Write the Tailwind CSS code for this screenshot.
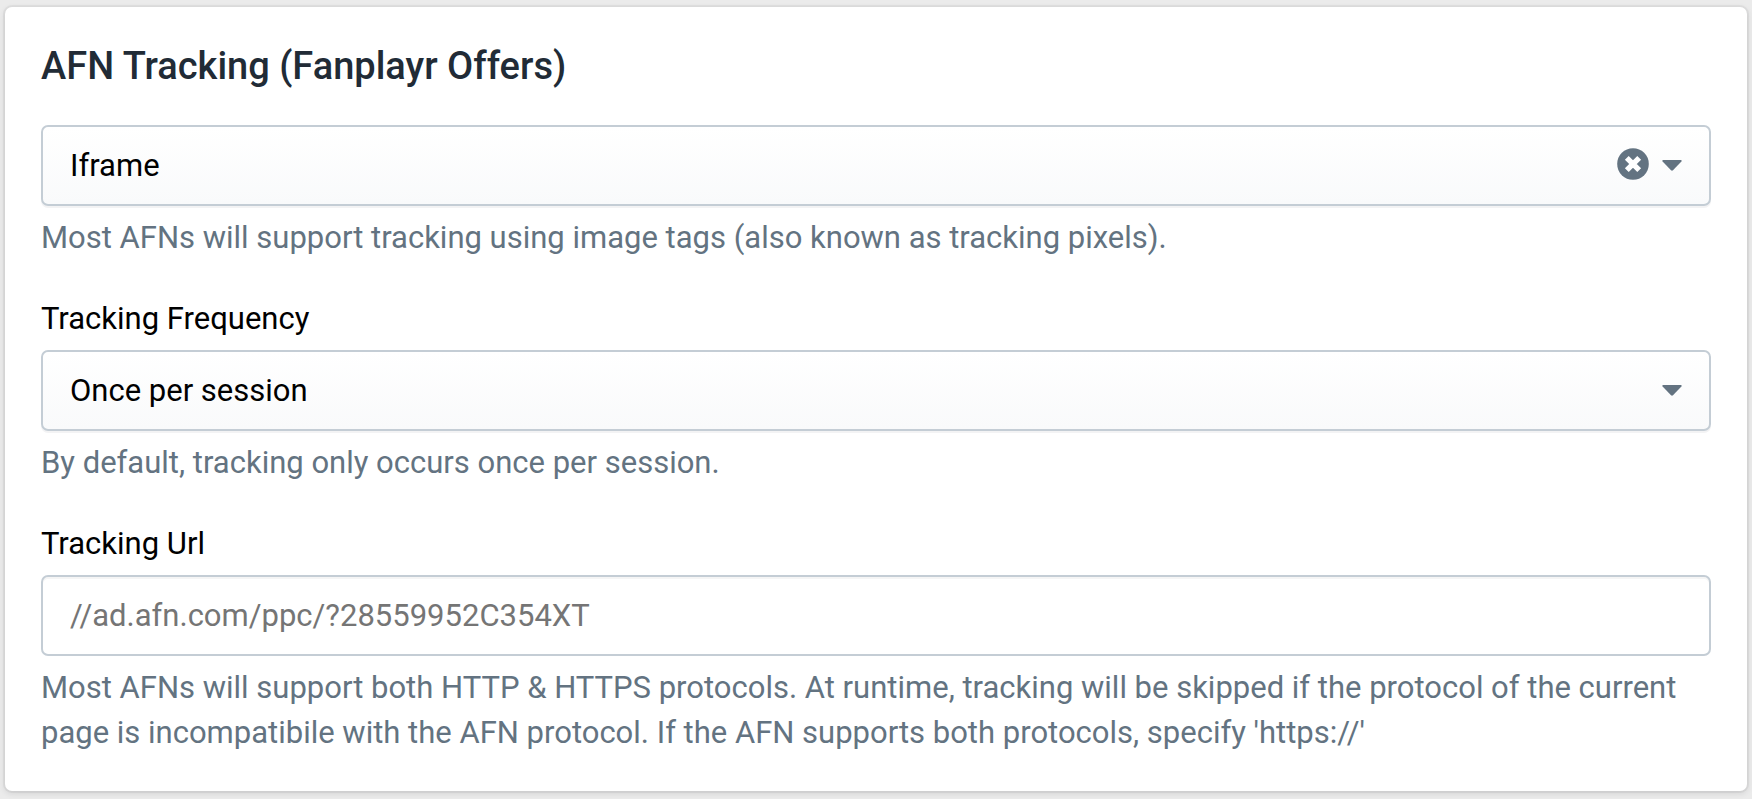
<!DOCTYPE html>
<html lang="en">

<head>
    <meta charset="UTF-8">
    <meta name="viewport" content="width=device-width, initial-scale=1.0">
    <title>AFN Tracking</title>
    <script src="https://cdn.jsdelivr.net/npm/@tailwindcss/browser@4"></script>
</head>

<body class="min-h-screen bg-[#ebebeb] px-[5px] pt-[7px] pb-2 font-[Roboto,sans-serif] text-[31px] leading-[45px] text-black">

    <form class="rounded-[7px] bg-white p-9 shadow-[0_0_0_2px_rgba(63,63,68,0.06),0_2px_6px_rgba(63,63,68,0.16)]">
        <h1 class="mb-9 text-[38px] leading-[46px] font-medium text-[#212b36]">AFN Tracking (Fanplayr Offers)</h1>

        <div class="space-y-9">
            <!-- Tracking type -->
            <div>
                <div class="relative">
                    <select aria-label="Tracking type" aria-describedby="type-help"
                        class="block h-[81px] w-full appearance-none rounded-[7px] border-2 border-[#c4cdd5] bg-linear-to-b from-white to-[#f9fafb] pr-32 pl-[27px] shadow-[0_2px_0_rgba(22,29,37,0.05)]">
                        <option>Iframe</option>
                        <option>Image</option>
                    </select>
                    <div class="pointer-events-none absolute inset-y-0 right-[29px] flex items-center gap-[13px] pb-1">
                        <button type="button" aria-label="Clear" class="pointer-events-auto">
                            <svg class="size-8" viewBox="0 0 32 32">
                                <circle cx="16" cy="16" r="15.8" fill="#637381" />
                                <path d="M9.8 9.8l12.4 12.4M22.2 9.8L9.8 22.2" stroke="#fff" stroke-width="5.4" />
                            </svg>
                        </button>
                        <svg class="mt-1 h-[11px] w-5" viewBox="0 0 20 11">
                            <path d="M1.2 0h17.6q1.4.3.6 1.5L11 10.3q-1 .9-2 0L.6 1.5Q-.2.3 1.2 0z" fill="#637381" />
                        </svg>
                    </div>
                </div>
                <p id="type-help" class="mt-[9px] text-[#637381]">Most AFNs will support tracking using image tags (also known as tracking pixels).</p>
            </div>

            <!-- Tracking frequency -->
            <div>
                <label for="frequency" class="mb-[9px] block">Tracking Frequency</label>
                <div class="relative">
                    <select id="frequency" aria-describedby="frequency-help"
                        class="block h-[81px] w-full appearance-none rounded-[7px] border-2 border-[#c4cdd5] bg-linear-to-b from-white to-[#f9fafb] pr-20 pl-[27px] shadow-[0_2px_0_rgba(22,29,37,0.05)]">
                        <option>Once per session</option>
                        <option>Every order</option>
                    </select>
                    <div class="pointer-events-none absolute inset-y-0 right-[29px] flex items-center pb-1">
                        <svg class="mt-1 h-[11px] w-5" viewBox="0 0 20 11">
                            <path d="M1.2 0h17.6q1.4.3.6 1.5L11 10.3q-1 .9-2 0L.6 1.5Q-.2.3 1.2 0z" fill="#637381" />
                        </svg>
                    </div>
                </div>
                <p id="frequency-help" class="mt-[9px] text-[#637381]">By default, tracking only occurs once per session.</p>
            </div>

            <!-- Tracking url -->
            <div>
                <label for="url" class="mb-[9px] block">Tracking Url</label>
                <input id="url" type="text" placeholder="//ad.afn.com/ppc/?28559952C354XT" aria-describedby="url-help"
                    class="block h-[81px] w-full rounded-[7px] border-2 border-[#c4cdd5] bg-white px-[27px] shadow-[inset_0_2px_0_rgba(63,63,68,0.05)] placeholder:text-[#757575]">
                <p id="url-help" class="mt-[9px] text-[#637381]">Most AFNs will support both HTTP &amp; HTTPS protocols. At runtime, tracking will be skipped if the protocol of the current page is incompatibile with the AFN protocol. If the AFN supports both protocols, specify 'https://'</p>
            </div>
        </div>
    </form>

</body>

</html>
